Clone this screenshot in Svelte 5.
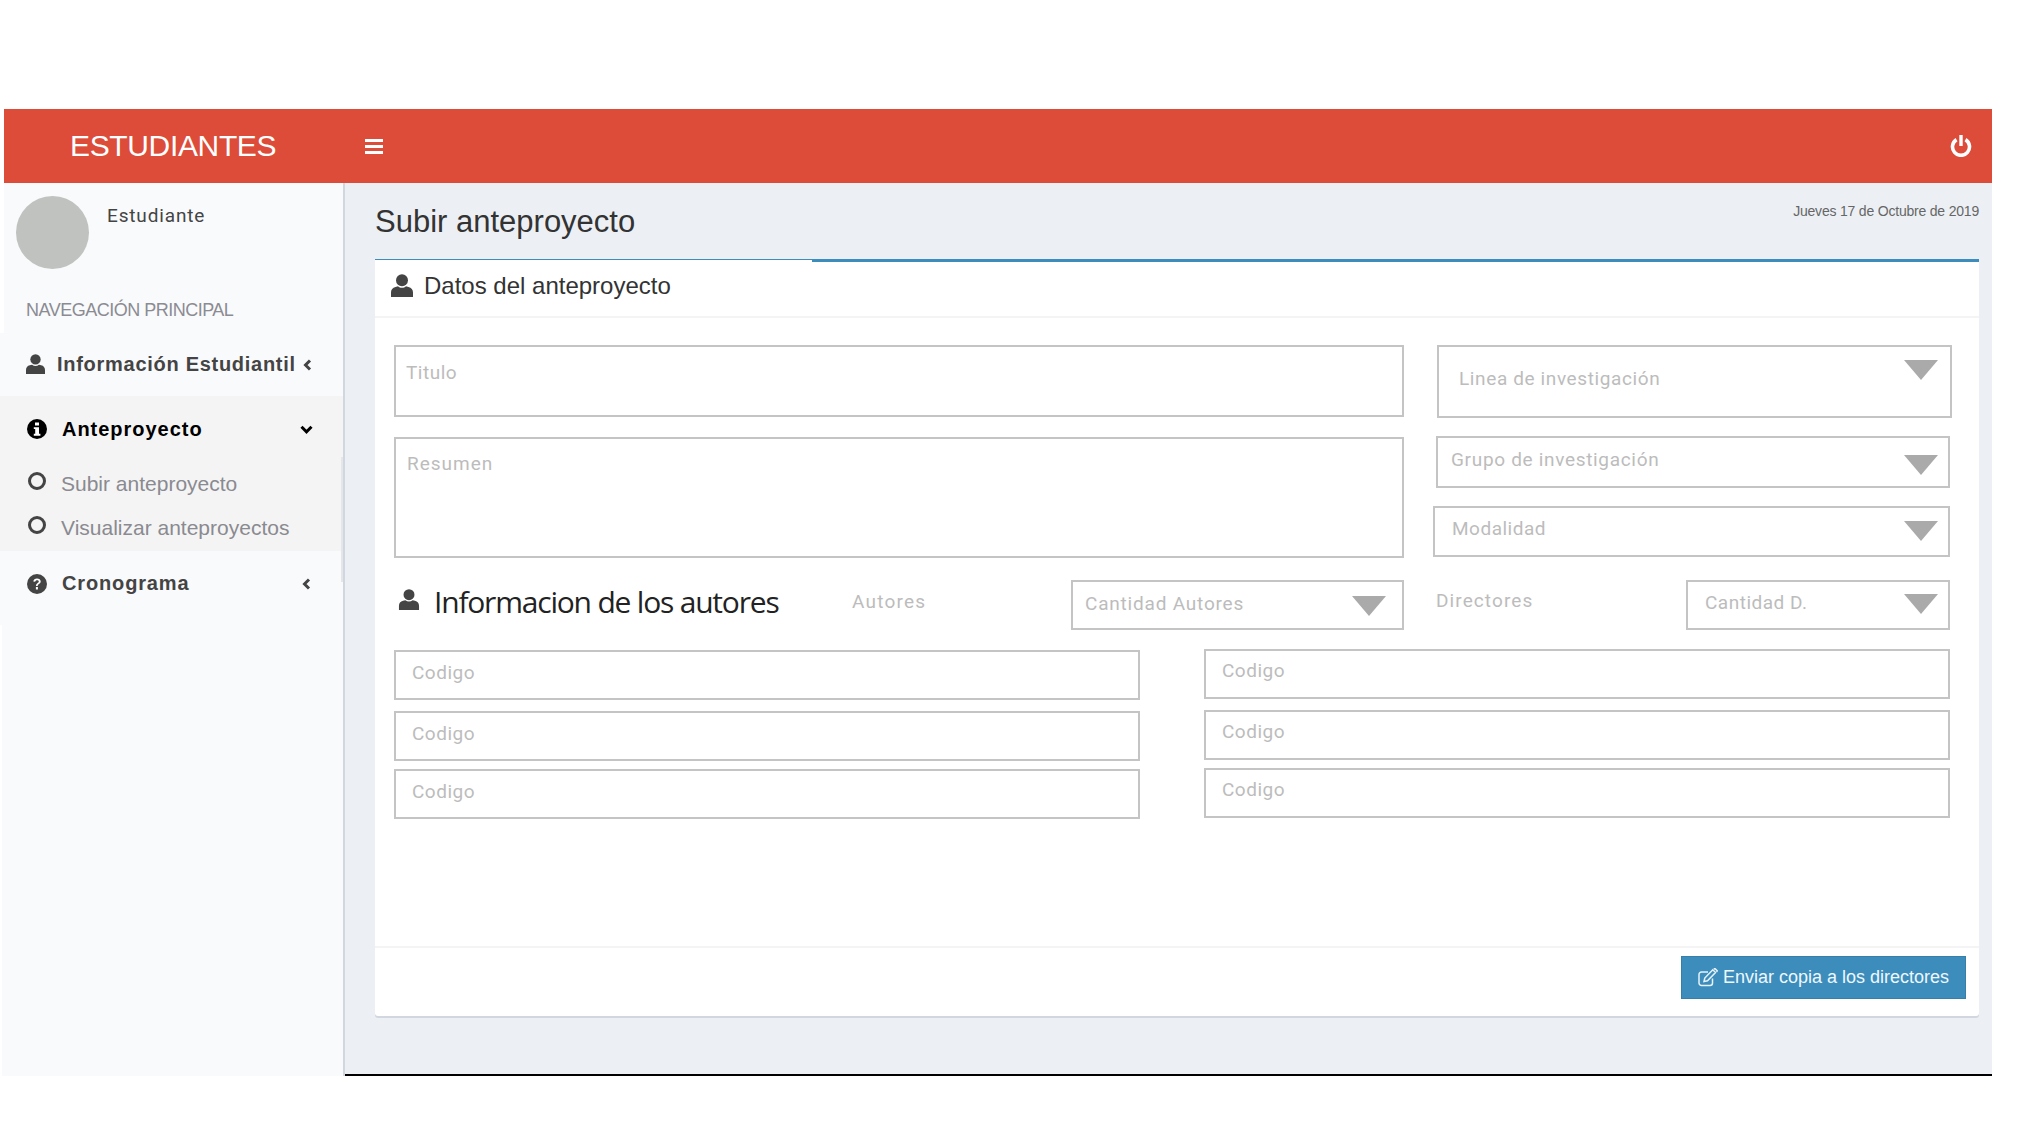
<script>
  const leftCodes = ['Codigo', 'Codigo', 'Codigo'];
  const rightCodes = ['Codigo', 'Codigo', 'Codigo'];
</script>

{#snippet user(cls)}
  <svg class={cls} viewBox="0 0 22 23" aria-hidden="true">
    <circle cx="11" cy="6.2" r="6" fill="#444" />
    <path d="M0 23v-4.5c0-3 1.6-5 4.5-5.6l2.5-.6c1.2 1 2.5 1.5 4 1.5s2.800-.5 4-1.500l2.500.6c2.900.6 4.500 2.600 4.500 5.600V23z" fill="#444" />
  </svg>
{/snippet}

{#snippet chevronLeft()}
  <svg class="chev-l" viewBox="0 0 9 12" aria-hidden="true"><path d="M7 1.500 2.500 6 7 10.500" fill="none" stroke="currentColor" stroke-width="3" /></svg>
{/snippet}

{#snippet tri(cls)}
  <span class="tri {cls}"></span>
{/snippet}

<div class="page">
  <header class="topbar">
    <div class="brand">ESTUDIANTES</div>
    <button class="burger" aria-label="Menú"><span></span><span></span><span></span></button>
    <svg class="power" viewBox="0 0 22 22" aria-hidden="true">
      <path d="M6.500 4.600a8.500 8.500 0 1 0 9 0" fill="none" stroke="#fff" stroke-width="3.600" />
      <path d="M11 0v11" stroke="#fff" stroke-width="3.400" />
    </svg>
  </header>

  <div class="shell">
    <aside class="sidebar">
      <div class="side-top">
        <div class="profile">
          <div class="avatar"></div>
          <div class="role">Estudiante</div>
        </div>
        <div class="navhead">NAVEGACIÓN PRINCIPAL</div>
      </div>
      <nav class="nav">
        <div class="item info">
          {@render user('u-side')}
          <span>Información Estudiantil</span>
          {@render chevronLeft()}
        </div>
        <div class="group">
          <div class="item ante">
            <svg class="round" viewBox="0 0 20 20" aria-hidden="true">
              <circle cx="10" cy="10" r="10" fill="#000" />
              <rect x="8" y="3.500" width="4" height="3" fill="#fff" />
              <path d="M6.800 8.200h5.200v6.600h1.400v1.900H6.800v-1.900h1.400v-4.700H6.800z" fill="#fff" />
            </svg>
            <span>Anteproyecto</span>
            <svg class="chev-d" viewBox="0 0 13 9" aria-hidden="true"><path d="M1.500 1.800 6.500 6.800 11.500 1.800" fill="none" stroke="#000" stroke-width="3" /></svg>
          </div>
          <div class="sub first"><span class="ring"></span><span>Subir anteproyecto</span></div>
          <div class="sub"><span class="ring"></span><span>Visualizar anteproyectos</span></div>
        </div>
        <div class="item crono">
          <svg class="round" viewBox="0 0 20 20" aria-hidden="true">
            <circle cx="10" cy="10" r="10" fill="#444" />
            <path d="M6.300 7.500c.2-2 1.700-3 3.700-3 2.100 0 3.700 1.200 3.700 3 0 2.400-3 2.400-3 4.500H9c0-3 2.800-3 2.800-4.500 0-.8-.8-1.200-1.700-1.200-1 0-1.700.5-1.900 1.500z" fill="#fff" />
            <rect x="8.900" y="13" width="2" height="2.500" fill="#fff" />
          </svg>
          <span>Cronograma</span>
          {@render chevronLeft()}
        </div>
        <div class="scroll-hint"></div>
      </nav>
      <div class="side-rest"></div>
    </aside>

    <main class="main">
      <div class="titlebar">
        <h1>Subir anteproyecto</h1>
        <div class="date">Jueves 17 de Octubre de 2019</div>
      </div>

      <section class="box">
        <div class="rule"><span class="thin"></span><span class="thick"></span></div>
        <div class="box-head">
          {@render user('u-head')}
          <h2>Datos del anteproyecto</h2>
        </div>

        <div class="box-body">
          <div class="top-grid">
            <div class="col-l">
              <div class="field titulo">Titulo</div>
              <div class="field resumen">Resumen</div>
            </div>
            <div class="col-r">
              <div class="field linea">Linea de investigación{@render tri('t-linea')}</div>
              <div class="field grupo">Grupo de investigación{@render tri('t-grupo')}</div>
              <div class="field modalidad">Modalidad{@render tri('t-modal')}</div>
            </div>
          </div>

          <div class="authors-row">
            {@render user('u-auth')}
            <h3>Informacion de los autores</h3>
            <span class="lbl autores">Autores</span>
            <div class="field cant-a">Cantidad Autores{@render tri('t-ca')}</div>
            <span class="lbl directores">Directores</span>
            <div class="field cant-d">Cantidad D.{@render tri('t-cd')}</div>
          </div>

          <div class="codes">
            <div class="codes-l">
              {#each leftCodes as c, i}
                <div class="field code" class:tight={i === 2}>{c}</div>
              {/each}
            </div>
            <div class="codes-r">
              {#each rightCodes as c, i}
                <div class="field code" class:tight={i === 2}>{c}</div>
              {/each}
            </div>
          </div>
        </div>

        <div class="box-foot">
          <button class="send">
            <svg viewBox="0 0 20 19" aria-hidden="true">
              <path d="M14.500 10.500v4.500a2.500 2.500 0 0 1-2.500 2.500H3.500A2.500 2.500 0 0 1 1 15V6.500A2.500 2.500 0 0 1 3.500 4H10" fill="none" stroke="#e6f2f8" stroke-width="1.500" />
              <path d="M6 13.500l.8-3.500 8-8.200 2.700 2.700-8 8.200zM15.800 1l1-.6 2.400 2.400-.6 1.100" fill="none" stroke="#e6f2f8" stroke-width="1.500" />
            </svg>
            <span>Enviar copia a los directores</span>
          </button>
        </div>
      </section>
    </main>
  </div>
</div>

<style>
  :global(body) {
    margin: 0;
    background: #fff;
  }

  .page {
    width: 2019px;
    height: 1133px;
    padding-top: 109px;
    box-sizing: border-box;
    font-family: "Liberation Sans", Arial, sans-serif;
    overflow: hidden;
  }

  .topbar {
    display: flex;
    align-items: center;
    width: 1988px;
    height: 74px;
    margin-left: 4px;
    background: #dd4b39;
    color: #fff;
  }

  .brand {
    width: 361px;
    padding-left: 66px;
    box-sizing: border-box;
    font-size: 30px;
    letter-spacing: -0.35px;
    line-height: 34px;
    margin-top: -1px;
  }

  .burger {
    display: flex;
    flex-direction: column;
    gap: 3px;
    width: 18px;
    padding: 0;
    border: 0;
    background: none;
  }

  .burger span {
    display: block;
    height: 3px;
    background: #fff;
  }

  .power {
    width: 22px;
    height: 22px;
    margin-left: auto;
    margin-right: 20px;
  }

  .shell {
    display: flex;
    width: 1992px;
    height: 893px;
  }

  .sidebar {
    position: relative;
    display: flex;
    flex-direction: column;
    flex: 0 0 345px;
    box-sizing: border-box;
    border-right: 2px solid #d2d6de;
  }

  .side-top {
    height: 150px;
    margin-left: 4px;
    background: #f9fafc;
  }

  .profile {
    display: flex;
    padding: 13px 0 0 12px;
  }

  .avatar {
    width: 73px;
    height: 73px;
    border-radius: 50%;
    background: #c0c2c0;
  }

  .role {
    margin: 8px 0 0 18px;
    font: 19px/24px Roboto, sans-serif;
    letter-spacing: 0.85px;
    color: #444;
  }

  .navhead {
    margin: 31px 0 0 22px;
    font-size: 18px;
    line-height: 20px;
    letter-spacing: -0.5px;
    color: #8b8b93;
  }

  .nav {
    position: relative;
    height: 292px;
    background: #f9fafc;
  }

  .side-rest {
    flex: 1;
    margin-left: 2px;
    background: #f9fafc;
  }

  .item {
    display: flex;
    align-items: center;
    font-family: "Liberation Sans", Arial, sans-serif;
    font-weight: 700;
    font-size: 20px;
    color: #444;
  }

  .info {
    height: 63px;
    padding-left: 26px;
  }

  .info span {
    margin-left: 12px;
    letter-spacing: 0.72px;
  }

  .u-side {
    width: 19px;
    height: 20px;
    margin-top: -2px;
  }

  .chev-l {
    width: 9px;
    height: 12px;
  }

  .info .chev-l {
    margin-left: 7px;
  }

  .group {
    height: 155px;
    background: #f4f4f5;
  }

  .ante {
    height: 66px;
    padding-left: 27px;
    color: #000;
  }

  .ante span {
    margin-left: 15px;
    letter-spacing: 0.98px;
  }

  .round {
    width: 20px;
    height: 20px;
  }

  .chev-d {
    width: 13px;
    height: 9px;
    margin-left: auto;
    margin-right: 30px;
  }

  .sub {
    display: flex;
    align-items: center;
    height: 44px;
    padding-left: 28px;
    padding-top: 2px;
    box-sizing: border-box;
    font-size: 21px;
    color: #8a8a90;
  }

  .sub.first {
    margin-top: -1px;
  }

  .ring {
    width: 18px;
    height: 18px;
    box-sizing: border-box;
    margin: -6px 15px 0 0;
    border: 3px solid #444;
    border-radius: 50%;
  }

  .crono {
    height: 65px;
    padding-left: 27px;
  }

  .crono span {
    margin-left: 15px;
    letter-spacing: 0.85px;
  }

  .crono .chev-l {
    margin-left: auto;
    margin-right: 32px;
  }

  .scroll-hint {
    position: absolute;
    right: 0;
    top: 124px;
    width: 2px;
    height: 125px;
    background: #e4e6ea;
  }

  .main {
    display: flex;
    flex-direction: column;
    flex: 1;
    box-sizing: border-box;
    border-bottom: 2px solid #000;
    background: #ecf0f5;
  }

  .titlebar {
    display: flex;
    justify-content: space-between;
    height: 76px;
    padding: 0 13px 0 30px;
  }

  h1 {
    margin: 20px 0 0;
    font-size: 31px;
    font-weight: 400;
    line-height: 38px;
    color: #333;
  }

  .date {
    margin-top: 20px;
    font-size: 14px;
    line-height: 16px;
    letter-spacing: -0.2px;
    color: #666;
  }

  .box {
    display: flex;
    flex-direction: column;
    width: 1604px;
    height: 757px;
    margin-left: 30px;
    background: #fff;
    box-shadow: 0 2px 0 #d2d6de;
    border-radius: 0 0 3px 3px;
  }

  .rule {
    display: flex;
    flex: 0 0 3px;
  }

  .thin {
    width: 437px;
    border-top: 1px solid #3c8dbc;
  }

  .thick {
    flex: 1;
    border-top: 3px solid #3c8dbc;
  }

  .box-head {
    display: flex;
    align-items: center;
    box-sizing: border-box;
    height: 56px;
    padding: 0 0 7px 16px;
    border-bottom: 2px solid #f4f4f4;
  }

  .u-head {
    width: 22px;
    height: 23px;
  }

  h2 {
    margin: 0 0 0 11px;
    font-size: 24px;
    font-weight: 400;
    color: #333;
  }

  .box-body {
    flex: 1;
    padding: 27px 0 0 19px;
  }

  .top-grid {
    display: flex;
  }

  .col-l {
    display: flex;
    flex-direction: column;
    gap: 20px;
    width: 1010px;
  }

  .col-r {
    display: flex;
    flex-direction: column;
    align-items: flex-end;
    width: 549px;
    gap: 18px;
  }

  .field {
    position: relative;
    box-sizing: border-box;
    border: 2px solid #c4c4c4;
    background: #fff;
    font: 19px/24px Roboto, sans-serif;
    letter-spacing: 0.5px;
    color: #bcbcbc;
  }

  .titulo {
    height: 72px;
    padding: 14px 10px;
  }

  .resumen {
    height: 121px;
    padding: 13px 11px;
    letter-spacing: 1px;
  }

  .linea {
    width: 515px;
    height: 73px;
    margin-right: 1px;
    padding: 20px 20px;
    letter-spacing: 0.62px;
  }

  .grupo {
    width: 514px;
    height: 52px;
    padding: 10px 13px;
    margin-right: 3px;
    letter-spacing: 0.68px;
  }

  .modalidad {
    width: 517px;
    height: 51px;
    padding: 9px 17px;
    margin-right: 3px;
  }

  .tri {
    position: absolute;
    width: 0;
    height: 0;
    border-left: 17px solid transparent;
    border-right: 17px solid transparent;
    border-top: 20px solid #aaa;
  }

  .t-linea { top: 13px; right: 12px; }
  .t-grupo { top: 17px; right: 10px; }
  .t-modal { top: 13px; right: 10px; }
  .t-ca { top: 14px; right: 16px; }
  .t-cd { top: 12px; right: 10px; }

  .authors-row {
    display: flex;
    align-items: flex-start;
    height: 92px;
    margin-top: 22px;
  }

  .u-auth {
    width: 22px;
    height: 21px;
    margin: 9px 0 0 4px;
  }

  h3 {
    width: 418px;
    margin: 2px 0 0 14px;
    font: 400 30px/40px "Open Sans", sans-serif;
    letter-spacing: -1.2px;
    color: #222;
  }

  .lbl {
    font: 19px/24px Roboto, sans-serif;
    color: #bcbcbc;
  }

  .autores {
    width: 219px;
    margin-top: 10px;
    letter-spacing: 1.2px;
  }

  .cant-a {
    width: 333px;
    height: 50px;
    padding: 10px 12px;
    letter-spacing: 0.8px;
  }

  .directores {
    width: 250px;
    margin: 9px 0 0 32px;
    letter-spacing: 1.1px;
  }

  .cant-d {
    width: 264px;
    height: 50px;
    padding: 9px 17px;
  }

  .codes {
    display: flex;
    gap: 64px;
  }

  .codes-l {
    display: flex;
    flex-direction: column;
    width: 746px;
    margin-top: -22px;
  }

  .codes-r {
    display: flex;
    flex-direction: column;
    width: 746px;
    margin-top: -23px;
  }

  .code {
    height: 50px;
    margin-bottom: 11px;
    padding: 9px 16px;
  }

  .codes-r .code {
    padding-top: 8px;
  }

  .code.tight {
    margin-top: -3px;
  }

  .box-foot {
    display: flex;
    justify-content: flex-end;
    align-items: flex-start;
    flex: 0 0 70px;
    box-sizing: border-box;
    padding: 8px 13px 0 0;
    border-top: 2px solid #f4f4f4;
  }

  .send {
    display: flex;
    align-items: center;
    justify-content: center;
    gap: 5px;
    width: 285px;
    height: 43px;
    padding: 0;
    border: 1px solid #367fa9;
    background: #3c8dbc;
    color: #eef7fc;
    font: 18px "Liberation Sans", Arial, sans-serif;
  }

  .send svg {
    width: 20px;
    height: 19px;
  }
</style>
